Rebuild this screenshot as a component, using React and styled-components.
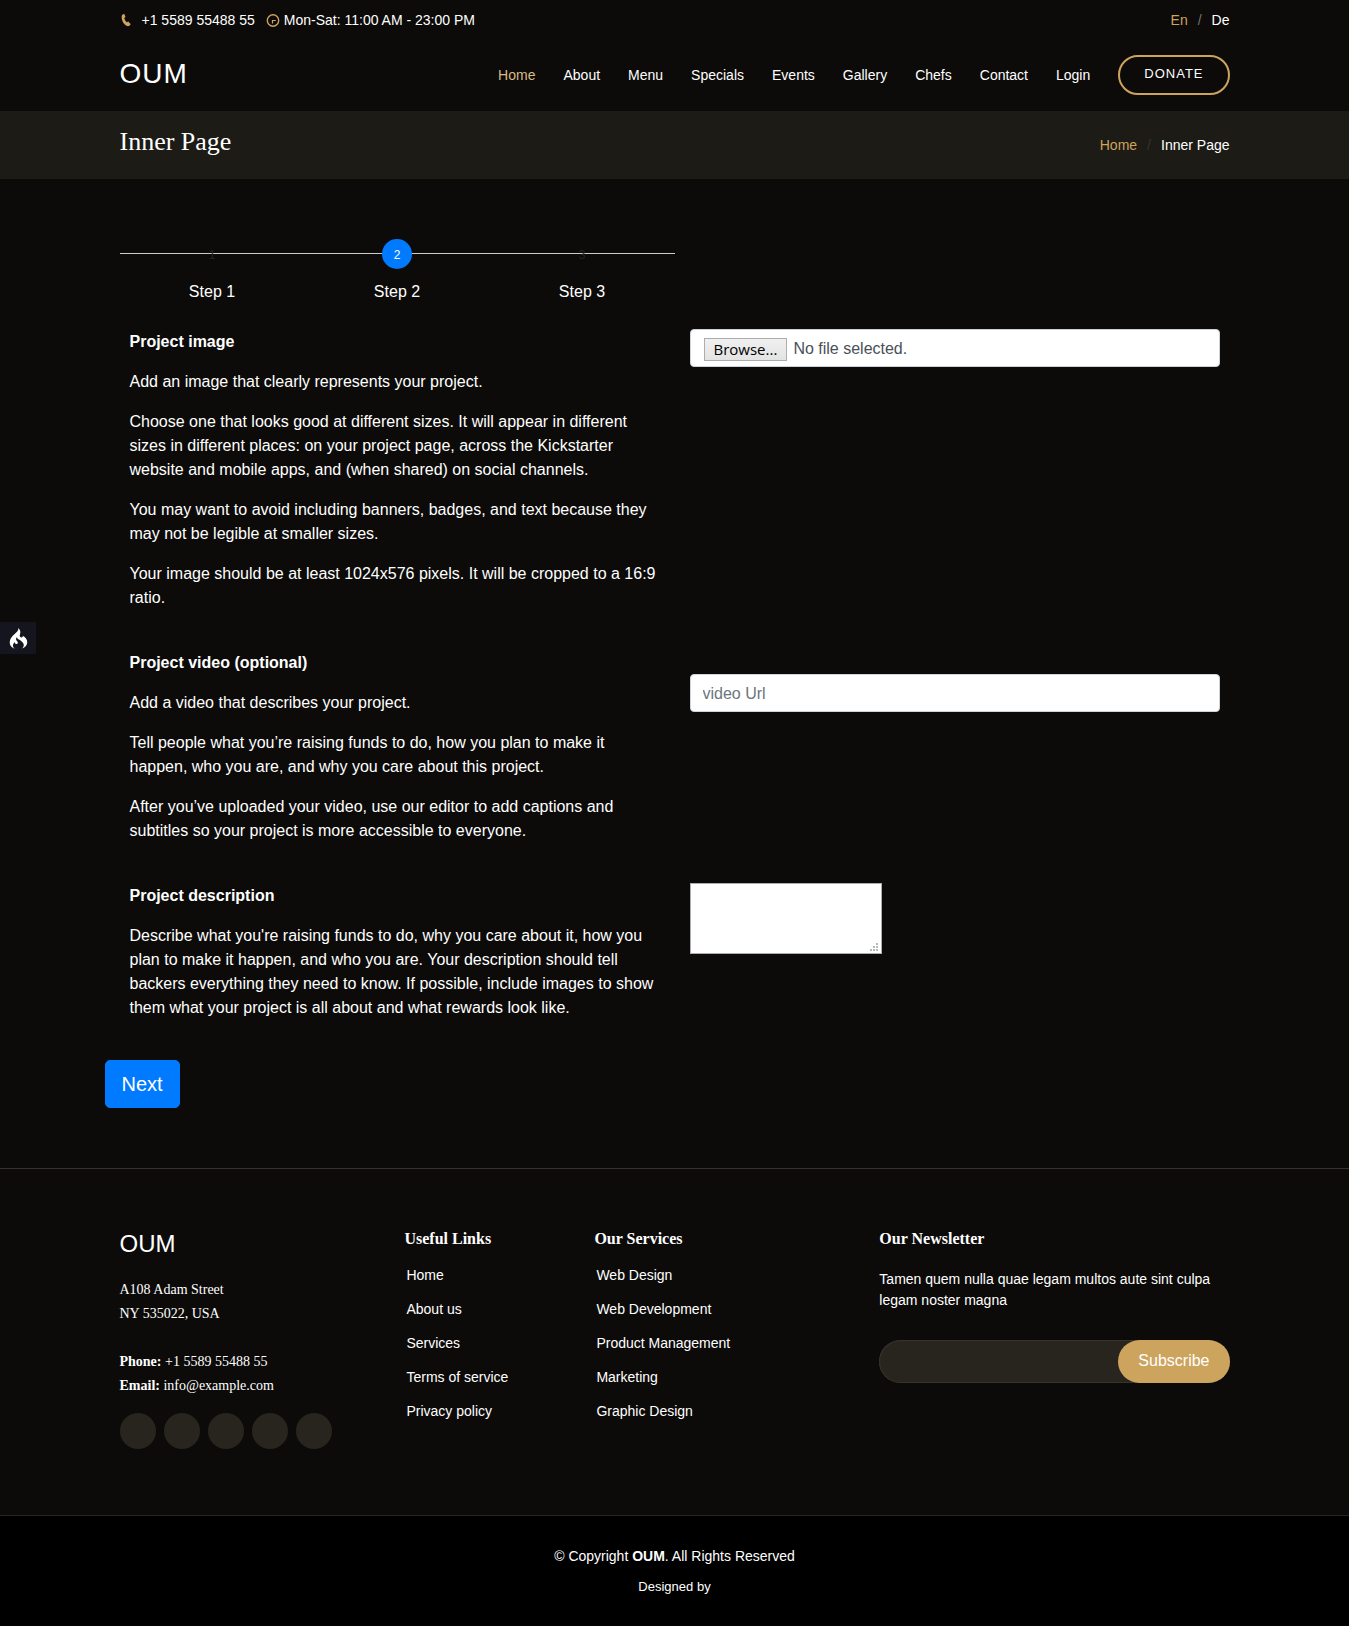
import React from "react";
import styled, { createGlobalStyle } from "styled-components";
import { SiCodeigniter } from "react-icons/si";

const sans = '"Liberation Sans", Arial, sans-serif';
const serif = '"Liberation Serif", "Times New Roman", serif';
const gold = "#cda45e";

const GlobalStyle = createGlobalStyle`
  *, *::before, *::after { box-sizing: border-box; }
  body {
    margin: 0;
    background: #0c0b09;
    color: #fff;
    font: 16px/24px ${sans};
  }
  h1, h2, h3, h4, p, ul, ol { margin: 0; padding: 0; }
  ul, ol { list-style: none; }
  a { color: inherit; text-decoration: none; }
`;

const Container = styled.div`
  width: 100%;
  max-width: 1140px;
  margin: 0 auto;
  padding: 0 15px;
`;

const SpreadRow = styled(Container)`
  display: flex;
  align-items: center;
  justify-content: space-between;
`;

/* Top bar */
const TopBar = styled(SpreadRow)`
  height: 40px;
  font-size: 14px;
`;

const Contact = styled.div`
  display: flex;
  align-items: center;
  gap: 11px;
`;

const ContactItem = styled.span`
  display: flex;
  align-items: center;
  gap: ${(p) => p.$gap}px;
`;

const SlashList = styled.ul`
  display: flex;
  font-size: 14px;
  line-height: 21px;

  li + li::before {
    content: "/";
    padding: 0 10px;
    color: ${(p) => p.$slash};
  }
`;

const GoldLink = styled.a`
  color: ${gold};
`;

/* Header */
const Header = styled(SpreadRow)`
  min-height: 71px;
`;

const Logo = styled.h1`
  font-size: 28px;
  font-weight: 400;
  line-height: 34px;
  letter-spacing: 1px;
  padding-bottom: 4px;
`;

const Nav = styled.nav`
  display: flex;
  align-items: center;
  gap: 28px;
  padding-bottom: 1px;
  font-size: 14px;
`;

const NavLink = styled.a`
  color: ${(p) => (p.$active ? "#d9ba85" : "#fff")};
`;

const DonateLink = styled.a`
  padding: 5px 24px 7px;
  border: 2px solid ${gold};
  border-radius: 50px;
  font-size: 13px;
  letter-spacing: 1px;
  text-transform: uppercase;
`;

/* Page title */
const TitleBand = styled.section`
  padding: 15px 0;
  background: #1d1b16;
`;

const TitleRow = styled(SpreadRow)`
  min-height: 38px;
`;

const PageTitle = styled.h2`
  align-self: flex-start;
  font: 400 26px/32px ${serif};
`;

/* Wizard */
const Main = styled.main`
  padding: 60px 0;
`;

const Steps = styled.ol`
  display: flex;
  width: 50%;
  background: linear-gradient(#ccc, #ccc) 0 14px / 100% 1px no-repeat;
`;

const Step = styled.li`
  flex: 1;
  display: flex;
  flex-direction: column;
  align-items: center;
  gap: 11px;
`;

const StepButton = styled.button`
  width: 30px;
  height: 30px;
  padding: 2px 0 0;
  border: 0;
  border-radius: 50%;
  background: ${(p) => (p.$active ? "#007bff" : "transparent")};
  color: ${(p) => (p.$active ? "#fff" : "#212529")};
  font: 12px/18px ${sans};
`;

const Form = styled.form`
  display: flex;
  flex-direction: column;
  gap: 25px;
  padding-top: 25px;
`;

const FormRow = styled.div`
  display: grid;
  grid-template-columns: 1fr 1fr;
  gap: 30px;
  padding: 0 10px;
`;

const Help = styled.div`
  display: flex;
  flex-direction: column;
  gap: 16px;
  padding: 1px 0 15px;
`;

const FieldLabel = styled.label`
  font-weight: 700;
`;

const Field = styled.div`
  padding-top: ${(p) => (p.$lowered ? 24 : 0)}px;
`;

const controlBox = `
  width: 100%;
  height: 38px;
  padding: 7px 12px 5px;
  border: 1px solid #ced4da;
  border-radius: 4px;
  background: #fff;
  color: #495057;
  font: 16px/24px ${sans};
`;

const TextInput = styled.input`
  display: block;
  ${controlBox}
  &::placeholder { color: #6c757d; opacity: 1; }
`;

const FilePicker = styled.label`
  display: flex;
  align-items: center;
  gap: 6px;
  ${controlBox}
  padding-left: 13px;
`;

const HiddenFile = styled.input`
  position: absolute;
  width: 1px;
  height: 1px;
  overflow: hidden;
  clip-path: inset(50%);
`;

const BrowseFace = styled.span`
  padding: 0 9px;
  border: 1px solid #adadad;
  background: linear-gradient(#f0f0f0, #e3e3e3);
  color: #000;
  font: 15px/21px "Open Sans", sans-serif;
`;

const TextArea = styled.textarea`
  display: block;
  width: 192px;
  height: 71px;
  border: 1px solid #abadb3;
  border-radius: 0;
  background: #fff;
  font: 16px/24px ${sans};
  resize: both;

  &::-webkit-resizer {
    background: url("data:image/svg+xml,%3Csvg xmlns='http://www.w3.org/2000/svg' width='8' height='8' fill='%23b8b8b8'%3E%3Cpath d='M6 0h2v2H6zM3 3h2v2H3zM6 3h2v2H6zM0 6h2v2H0zM3 6h2v2H3zM6 6h2v2H6z'/%3E%3C/svg%3E")
      right 3px bottom 2px no-repeat #fff;
  }
`;

const NextButton = styled.button`
  align-self: flex-start;
  margin-left: -15px;
  padding: 8px 16px;
  border: 1px solid #007bff;
  border-radius: 5px;
  background: #007bff;
  color: #fff;
  font: 20px/30px ${sans};
`;

const DebugBadge = styled.a`
  position: fixed;
  top: 622px;
  left: 0;
  display: flex;
  align-items: center;
  justify-content: center;
  width: 36px;
  height: 32px;
  background: #14151f;
  color: #fff;
`;

/* Footer */
const FooterTop = styled.div`
  padding: 60px 0 66px;
  border-top: 1px solid #37332a;
`;

const FooterGrid = styled(Container)`
  display: grid;
  grid-template-columns: 3fr 2fr 3fr 4fr;
  padding: 0;

  > * { padding: 0 15px; }
`;

const FooterBrand = styled.h3`
  padding-bottom: 20px;
  font-size: 24px;
  font-weight: 400;
  line-height: 29px;
`;

const Address = styled.p`
  font: 14px/24px ${serif};
`;

const Socials = styled.div`
  display: flex;
  gap: 8px;
  padding-top: 15px;
`;

const SocialLink = styled.a`
  width: 36px;
  height: 36px;
  border-radius: 50%;
  background: #28251f;
`;

const FooterHeading = styled.h4`
  padding-bottom: 20px;
  font: 700 16px/19px ${serif};
`;

const LinkList = styled.ul`
  display: flex;
  flex-direction: column;
  gap: 20px;
  padding-left: 2px;
  font-size: 14px;
  line-height: 14px;
`;

const NewsText = styled.p`
  padding-top: 1px;
  font-size: 14px;
  line-height: 21px;
`;

const NewsForm = styled.form`
  display: flex;
  height: 43px;
  margin-top: 29px;
  border-radius: 50px;
  background: #28251f;
  box-shadow: inset 0 0 0 1px #37332a;
`;

const NewsInput = styled.input`
  flex: 1;
  min-width: 0;
  padding: 0 16px;
  border: 0;
  background: none;
  color: #fff;
  font: 16px/24px ${sans};
`;

const SubscribeButton = styled.button`
  padding: 0 20px 2px;
  border: 0;
  border-radius: 50px;
  background: ${gold};
  color: #fff;
  font: 16px/24px ${sans};
`;

const FooterBottom = styled.div`
  padding: 30px 0;
  border-top: 1px solid #28251f;
  background: #000;
  text-align: center;
  font-size: 14px;
  line-height: 21px;
`;

const Credits = styled.p`
  padding-top: 10px;
  font-size: 13px;
  line-height: 19px;
`;

const PhoneIcon = () => (
  <svg width="14" height="14" viewBox="0 0 14 14" fill={gold} aria-hidden="true">
    <path d="M2 2 4.200.8 5.500 3.900 4.200 5c.4 1.700 1.200 3.100 2.400 4.200L8.300 8.500l2.400 2.700-1.600 1.900C7.500 13.500 5.600 12.800 4 10.800 2 8.300 1 4.300 2 2Z" />
  </svg>
);

const ClockIcon = () => (
  <svg width="14" height="14" viewBox="0 0 14 14" fill="none" stroke={gold} aria-hidden="true">
    <circle cx="7" cy="7.500" r="5.700" strokeWidth="1.400" />
    <path d="M6.500 10.500V7.500H9.800" strokeWidth="1.200" />
  </svg>
);

const NAV = ["Home", "About", "Menu", "Specials", "Events", "Gallery", "Chefs", "Contact", "Login"];
const USEFUL = ["Home", "About us", "Services", "Terms of service", "Privacy policy"];
const SERVICES = ["Web Design", "Web Development", "Product Management", "Marketing", "Graphic Design"];
const SOCIALS = ["Twitter", "Facebook", "Instagram", "Skype", "LinkedIn"];

const FooterLinks = ({ title, items }) => (
  <div>
    <FooterHeading>{title}</FooterHeading>
    <LinkList>
      {items.map((item) => (
        <li key={item}><a href="#">{item}</a></li>
      ))}
    </LinkList>
  </div>
);

export default function App() {
  return (
    <>
      <GlobalStyle />
      <TopBar>
        <Contact>
          <ContactItem $gap={8}><PhoneIcon />+1 5589 55488 55</ContactItem>
          <ContactItem $gap={4}><ClockIcon />Mon-Sat: 11:00 AM - 23:00 PM</ContactItem>
        </Contact>
        <SlashList $slash="#76746f">
          <li><GoldLink href="#">En</GoldLink></li>
          <li><a href="#">De</a></li>
        </SlashList>
      </TopBar>

      <Header as="header">
        <Logo><a href="#">OUM</a></Logo>
        <Nav>
          {NAV.map((item, i) => (
            <NavLink key={item} href="#" $active={i === 0}>{item}</NavLink>
          ))}
          <DonateLink href="#">Donate</DonateLink>
        </Nav>
      </Header>

      <TitleBand>
        <TitleRow>
          <PageTitle>Inner Page</PageTitle>
          <SlashList $slash="#37332a">
            <li><GoldLink href="#">Home</GoldLink></li>
            <li>Inner Page</li>
          </SlashList>
        </TitleRow>
      </TitleBand>

      <Main>
        <Container>
          <Steps>
            {[1, 2, 3].map((n) => (
              <Step key={n}>
                <StepButton type="button" $active={n === 2}>{n}</StepButton>
                <p>Step {n}</p>
              </Step>
            ))}
          </Steps>

          <Form>
            <FormRow>
              <Help>
                <FieldLabel htmlFor="image">Project image</FieldLabel>
                <p>Add an image that clearly represents your project.</p>
                <p>Choose one that looks good at different sizes. It will appear in different sizes in different places: on your project page, across the Kickstarter website and mobile apps, and (when shared) on social channels.</p>
                <p>You may want to avoid including banners, badges, and text because they may not be legible at smaller sizes.</p>
                <p>Your image should be at least 1024x576 pixels. It will be cropped to a 16:9 ratio.</p>
              </Help>
              <Field>
                <FilePicker>
                  <HiddenFile id="image" type="file" />
                  <BrowseFace>Browse...</BrowseFace>
                  <span>No file selected.</span>
                </FilePicker>
              </Field>
            </FormRow>

            <FormRow>
              <Help>
                <FieldLabel htmlFor="video">Project video (optional)</FieldLabel>
                <p>Add a video that describes your project.</p>
                <p>Tell people what you’re raising funds to do, how you plan to make it happen, who you are, and why you care about this project.</p>
                <p>After you’ve uploaded your video, use our editor to add captions and subtitles so your project is more accessible to everyone.</p>
              </Help>
              <Field $lowered>
                <TextInput id="video" type="text" placeholder="video Url" />
              </Field>
            </FormRow>

            <FormRow>
              <Help>
                <FieldLabel htmlFor="description">Project description</FieldLabel>
                <p>Describe what you're raising funds to do, why you care about it, how you plan to make it happen, and who you are. Your description should tell backers everything they need to know. If possible, include images to show them what your project is all about and what rewards look like.</p>
              </Help>
              <Field>
                <TextArea id="description" />
              </Field>
            </FormRow>

            <NextButton type="button">Next</NextButton>
          </Form>
        </Container>
      </Main>

      <footer>
        <FooterTop>
          <FooterGrid>
            <div>
              <FooterBrand>OUM</FooterBrand>
              <Address>
                A108 Adam Street<br />
                NY 535022, USA<br />
                <br />
                <strong>Phone:</strong> +1 5589 55488 55<br />
                <strong>Email:</strong> info@example.com
              </Address>
              <Socials>
                {SOCIALS.map((name) => (
                  <SocialLink key={name} href="#" aria-label={name} />
                ))}
              </Socials>
            </div>
            <FooterLinks title="Useful Links" items={USEFUL} />
            <FooterLinks title="Our Services" items={SERVICES} />
            <div>
              <FooterHeading>Our Newsletter</FooterHeading>
              <NewsText>Tamen quem nulla quae legam multos aute sint culpa legam noster magna</NewsText>
              <NewsForm>
                <NewsInput type="email" aria-label="Email address" />
                <SubscribeButton type="button">Subscribe</SubscribeButton>
              </NewsForm>
            </div>
          </FooterGrid>
        </FooterTop>
        <FooterBottom>
          <p>© Copyright <strong>OUM</strong>. All Rights Reserved</p>
          <Credits>Designed by</Credits>
        </FooterBottom>
      </footer>

      <DebugBadge href="#" aria-label="Debug toolbar">
        <SiCodeigniter size={21} />
      </DebugBadge>
    </>
  );
}
